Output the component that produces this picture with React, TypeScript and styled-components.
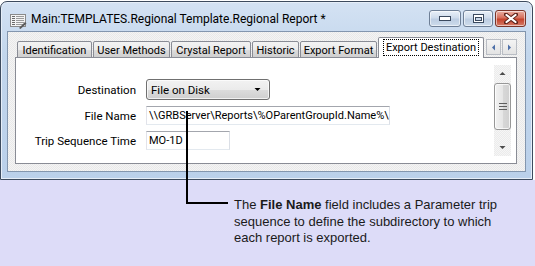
import React from 'react';
import styled, { createGlobalStyle } from 'styled-components';

const GlobalStyle = createGlobalStyle`
  html, body { margin: 0; padding: 0; background: #ffffff; }
  body { width: 535px; height: 266px; overflow: hidden; font-family: Roboto, "Liberation Sans", sans-serif; }
`;

const uiFont = 'Roboto, "Liberation Sans", sans-serif';

const Page = styled.div`
    position: relative;
    width: 535px;
    height: 266px;
    display: flex;
    flex-direction: column;
`;

const Top = styled.div`
    height: 180px;
    padding-top: 1px;
    box-sizing: border-box;
    background: #ffffff;
`;

const Window = styled.div`
    width: 533px;
    height: 179px;
    box-sizing: border-box;
    border: 1px solid #3d4b5e;
    border-radius: 7px 7px 0 0;
    background: linear-gradient(#d4e2f3, #c2d6ec 30%, #bad0ea);
    box-shadow: inset 0 0 0 1px #e6eef8;
    display: flex;
    flex-direction: column;
`;

const TitleBar = styled.div`
    height: 29px;
    display: flex;
    align-items: flex-start;
    padding-left: 9px;
`;

const TitleIcon = styled.svg`
    margin-top: 11px;
    flex: none;
`;

const Title = styled.div`
    margin-left: 4px;
    margin-top: 10px;
    font-family: ${uiFont};
    font-size: 12px;
    color: #000;
    white-space: nowrap;
    flex: 1;
`;

const Caption = styled.div`
    display: flex;
    gap: 2px;
    margin-top: 8px;
    margin-right: 6px;
`;

const CaptionButton = styled.div<{ $close?: boolean; $w: number }>`
    width: ${p => p.$w}px;
    height: 17px;
    box-sizing: border-box;
    border: 1px solid ${p => (p.$close ? '#7a3428' : '#6e7f96')};
    border-radius: 3px;
    background: ${p =>
        p.$close
            ? 'linear-gradient(#eab0a4, #d66f5c 45%, #c4432c 55%, #d57c69)'
            : 'linear-gradient(#e9f0f8, #cfdcec 45%, #bccde2 55%, #cedcec)'};
    box-shadow: inset 0 0 0 1px rgba(255, 255, 255, 0.55);
    display: flex;
    align-items: center;
    justify-content: center;
`;

const Client = styled.div`
    margin: 0 6px 7px 6px;
    flex: 1;
    border: 1px solid #8396ae;
    background-color: #f0f0f0;
    background-image: repeating-conic-gradient(#f4f4f4 0 25%, #e9e9e9 0 50%);
    background-size: 2px 2px;
    padding: 5px 8px 7px 7px;
    display: flex;
    flex-direction: column;
`;

const TabStrip = styled.div`
    height: 21px;
    display: flex;
    align-items: flex-end;
    padding-left: 2px;
    margin-bottom: -1px;
`;

const Tab = styled.div<{ $w: number; $active?: boolean }>`
    width: ${p => p.$w}px;
    height: ${p => (p.$active ? 21 : 17)}px;
    box-sizing: border-box;
    margin-left: 1px;
    border: 1px solid #898c95;
    border-bottom: ${p => (p.$active ? 'none' : '1px solid #898c95')};
    border-radius: 2px 2px 0 0;
    background: ${p =>
        p.$active ? '#ffffff' : 'linear-gradient(#f3f3f3, #ebebeb 50%, #dddddd 50%, #cfcfcf)'};
    position: relative;
    z-index: ${p => (p.$active ? 1 : 0)};
    font-family: ${uiFont};
    font-size: 11px;
    color: #000;
    display: flex;
    align-items: ${p => (p.$active ? 'flex-start' : 'center')};
    justify-content: center;
    padding-top: ${p => (p.$active ? 2 : 1)}px;
    white-space: nowrap;
    &:first-child {
        margin-left: 0;
    }
`;

const Focus = styled.span`
    outline: 1px dotted #000;
    padding: 0 2px;
    line-height: 15px;
`;

const TabScroll = styled.div`
    margin-left: auto;
    display: flex;
    align-self: flex-start;
    margin-top: 2px;
`;

const ScrollBtn = styled.div`
    width: 15px;
    height: 16px;
    box-sizing: border-box;
    border: 1px solid #b9bdc4;
    background: linear-gradient(#f4f4f4, #e3e3e3);
    display: flex;
    align-items: center;
    justify-content: center;
    & + & {
        margin-left: 1px;
    }
`;

const Panel = styled.div`
    flex: 1;
    background: #ffffff;
    border: 1px solid #898c95;
    display: flex;
    padding: 7px 5px 7px 0;
`;

const Form = styled.div`
    flex: 1;
    padding-top: 14px;
    display: grid;
    grid-template-columns: 120px auto;
    column-gap: 10px;
    row-gap: 6px;
    align-items: center;
    align-content: start;
    justify-items: start;
`;

const Label = styled.div`
    justify-self: end;
    font-family: ${uiFont};
    font-size: 11.5px;
    color: #000;
    white-space: nowrap;
`;

const Select = styled.div`
    width: 124px;
    height: 21px;
    box-sizing: border-box;
    border: 1px solid #707070;
    border-radius: 3px;
    background: linear-gradient(#f2f2f2, #ebebeb 50%, #dddddd 50%, #cfcfcf);
    box-shadow: inset 0 0 0 1px rgba(255, 255, 255, 0.7);
    display: flex;
    align-items: center;
    padding: 0 8px 0 4px;
    font-family: ${uiFont};
    font-size: 11.5px;
    color: #000;
`;

const SelectText = styled.span`
    flex: 1;
`;

const TextBox = styled.div<{ $w: number }>`
    width: ${p => p.$w}px;
    height: 19px;
    box-sizing: border-box;
    border: 1px solid #abadb3;
    border-top-color: #a3a6ad;
    border-left-color: #e2e3ea;
    border-right-color: #dbdfe6;
    border-bottom-color: #e3e9ef;
    background: #fff;
    padding: 0 2px;
    display: flex;
    align-items: center;
    font-family: ${uiFont};
    font-size: 11px;
    color: #000;
    white-space: nowrap;
    overflow: hidden;
`;

const ScrollBar = styled.div`
    width: 17px;
    display: flex;
    flex-direction: column;
    background-color: #f0f0f0;
    background-image: repeating-conic-gradient(#f6f6f6 0 25%, #ebebeb 0 50%);
    background-size: 2px 2px;
`;

const ArrowCell = styled.div`
    height: 17px;
    display: flex;
    align-items: center;
    justify-content: center;
`;

const Thumb = styled.div`
    height: 47px;
    margin: 1px 0 8px;
    box-sizing: border-box;
    border: 1px solid #979797;
    border-radius: 3px;
    background: linear-gradient(90deg, #f2f2f2, #e6e6e6 50%, #d8d8d8 50%, #d0d0d0);
    box-shadow: inset 0 0 0 1px rgba(255, 255, 255, 0.75);
    display: flex;
    align-items: center;
    justify-content: center;
`;

const Track = styled.div`
    flex: 1;
`;

const Note = styled.div`
    flex: 1;
    background: #dddcf8;
    padding: 17px 0 0 234px;
    font-family: "Liberation Sans", Arial, sans-serif;
    font-size: 13px;
    line-height: 16.5px;
    color: #1a1a1a;
`;

const Leader = styled.svg`
    position: absolute;
    left: 0;
    top: 0;
    pointer-events: none;
`;

const tabs = [
    { label: 'Identification', w: 75 },
    { label: 'User Methods', w: 77 },
    { label: 'Crystal Report', w: 80 },
    { label: 'Historic', w: 47 },
    { label: 'Export Format', w: 77 },
];

const AppIcon = () => (
    <TitleIcon width="17" height="16" viewBox="0 0 17 16">
        <rect x="0.5" y="1.5" width="15" height="12" fill="#f4f4f4" stroke="#8a8a8a" />
        {[3, 5, 7, 9, 11].map(y => (
            <g key={y}>
                <rect x="2" y={y} width="3" height="1" fill="#6b6b6b" />
                <rect x="6" y={y} width="8" height="1" fill="#9a9a9a" />
            </g>
        ))}
        <path d="M9 15 L15 9 L16.5 10.5 L10.5 16 Z" fill="#5a5a5a" />
    </TitleIcon>
);

const Arrow = ({ dir, color }: { dir: 'up' | 'down' | 'left' | 'right'; color: string }) => {
    const d = {
        up: 'M0.5 4 L3.5 1 L6.5 4 Z',
        down: 'M0.5 1 L3.5 4 L6.5 1 Z',
        left: 'M4 0.5 L1 3.5 L4 6.5 Z',
        right: 'M1 0.5 L4 3.5 L1 6.5 Z',
    }[dir];
    const horiz = dir === 'left' || dir === 'right';
    return (
        <svg width={horiz ? 5 : 7} height={horiz ? 7 : 5} viewBox={horiz ? '0 0 5 7' : '0 0 7 5'}>
            <path d={d} fill={color} />
        </svg>
    );
};

export default function App() {
    return (
        <Page>
            <GlobalStyle />
            <Top>
                <Window>
                    <TitleBar>
                        <AppIcon />
                        <Title>Main:TEMPLATES.Regional Template.Regional Report *</Title>
                        <Caption>
                            <CaptionButton $w={32}>
                                <svg width="12" height="5" viewBox="0 0 12 5">
                                    <rect x="0.5" y="0.5" width="11" height="4" fill="#fff" stroke="#3b4a5f" />
                                </svg>
                            </CaptionButton>
                            <CaptionButton $w={30}>
                                <svg width="11" height="9" viewBox="0 0 11 9">
                                    <rect x="0.5" y="0.5" width="10" height="8" fill="#fff" stroke="#3b4a5f" />
                                    <rect x="2.5" y="3.5" width="6" height="3" fill="#c8d6e8" stroke="#3b4a5f" />
                                </svg>
                            </CaptionButton>
                            <CaptionButton $w={31} $close>
                                <svg width="14" height="11" viewBox="0 0 14 11">
                                    <path
                                        d="M2 1.5 L12 9.5 M12 1.5 L2 9.5"
                                        stroke="#5a2118"
                                        strokeWidth="4"
                                        strokeLinecap="round"
                                    />
                                    <path
                                        d="M2.5 2 L11.5 9 M11.5 2 L2.5 9"
                                        stroke="#ffffff"
                                        strokeWidth="2.2"
                                        strokeLinecap="round"
                                    />
                                </svg>
                            </CaptionButton>
                        </Caption>
                    </TitleBar>
                    <Client>
                        <TabStrip>
                            {tabs.map(t => (
                                <Tab key={t.label} $w={t.w}>
                                    {t.label}
                                </Tab>
                            ))}
                            <Tab $w={106} $active>
                                <Focus>Export Destination</Focus>
                            </Tab>
                            <TabScroll>
                                <ScrollBtn>
                                    <Arrow dir="left" color="#4d6fa8" />
                                </ScrollBtn>
                                <ScrollBtn>
                                    <Arrow dir="right" color="#4d6fa8" />
                                </ScrollBtn>
                            </TabScroll>
                        </TabStrip>
                        <Panel>
                            <Form>
                                <Label>Destination</Label>
                                <Select>
                                    <SelectText>File on Disk</SelectText>
                                    <Arrow dir="down" color="#000" />
                                </Select>
                                <Label>File Name</Label>
                                <TextBox $w={244}>\\GRBServer\Reports\%OParentGroupId.Name%\</TextBox>
                                <Label>Trip Sequence Time</Label>
                                <TextBox $w={84}>MO-1D</TextBox>
                            </Form>
                            <ScrollBar>
                                <ArrowCell>
                                    <Arrow dir="up" color="#4a4a4a" />
                                </ArrowCell>
                                <Thumb>
                                    <svg width="8" height="7" viewBox="0 0 8 7">
                                        <path d="M0 0.5 H8 M0 3.5 H8 M0 6.5 H8" stroke="#5f5f5f" />
                                    </svg>
                                </Thumb>
                                <Track />
                                <ArrowCell>
                                    <Arrow dir="down" color="#4a4a4a" />
                                </ArrowCell>
                            </ScrollBar>
                        </Panel>
                    </Client>
                </Window>
            </Top>
            <Note>
                The <b>File Name</b> field includes a Parameter trip
                <br />
                sequence to define the subdirectory to which
                <br />
                each report is exported.
            </Note>
            <Leader width="535" height="266">
                <path d="M187 111 V203 H228" fill="none" stroke="#000" strokeWidth="2" />
            </Leader>
        </Page>
    );
}
